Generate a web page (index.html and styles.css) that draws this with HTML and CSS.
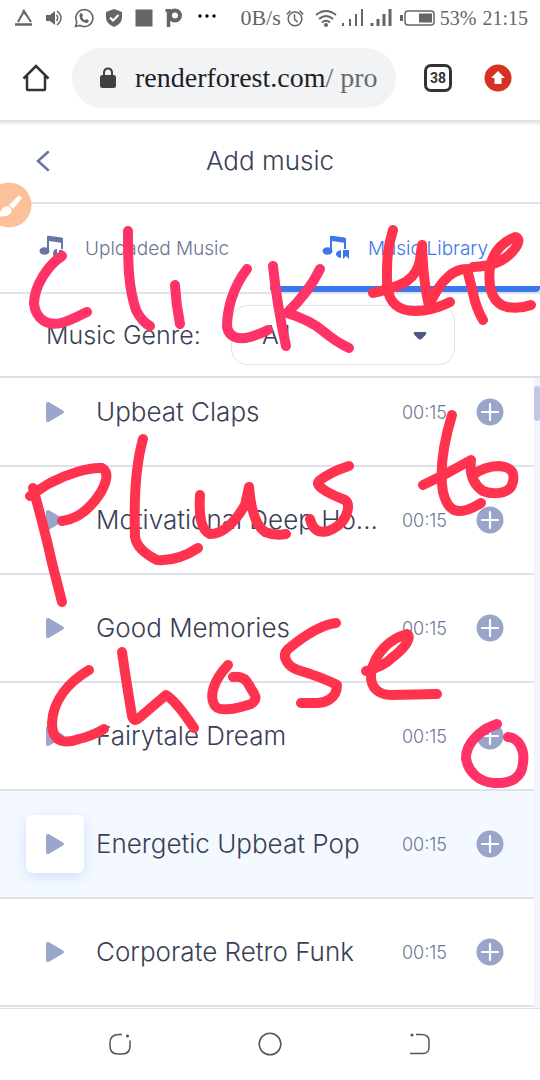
FILE: index.html
```html
<!DOCTYPE html>
<html lang="en">
<head>
<meta charset="utf-8">
<meta name="viewport" content="width=device-width, initial-scale=1">
<title>Add music</title>
<link rel="stylesheet" href="styles.css">
</head>
<body>
<svg class="defs" aria-hidden="true">
  <symbol id="play" viewBox="0 0 20 22"><path d="M1 3.2C1 1 2.800 .4 4.500 1.400L17.500 9.200C19.400 10.300 19.400 11.700 17.500 12.800L4.500 20.600C2.800 21.600 1 21 1 18.800Z" fill="#9aa5cc"/></symbol>
  <symbol id="plus" viewBox="0 0 28 28"><circle cx="14" cy="14" r="13.500" fill="#9aa5cc"/><path d="M14 6V22M6 14H22" stroke="#fff" stroke-width="2.200" stroke-linecap="round"/></symbol>
  <symbol id="note" viewBox="0 0 30 26"><ellipse cx="5.500" cy="16" rx="5" ry="3.800" fill="currentColor"/><path d="M9 16V2.500L23 4.500V14" fill="none" stroke="currentColor" stroke-width="2"/><path d="M8 1.500Q8 .5 9.500 .7L22.500 2.500Q24 2.800 24 4V8L10 6Z" fill="currentColor"/></symbol>
</svg>
<div class="screen">
  <div class="status">
    <div class="status-icons">
      <svg width="20" height="20" viewBox="0 0 20 20" fill="none" stroke="#656565" stroke-width="2"><path d="M4 14L10 3L17 14M9 2L12 7"/><path d="M1 16.500H18" stroke-width="2.500"/></svg>
      <svg width="20" height="20" viewBox="0 0 20 20" fill="#656565"><path d="M2 7H6L11 3V17L6 13H2Z"/><path d="M12.500 7Q15 10 12.500 13M13 3Q21 10 13 17" fill="none" stroke="#656565" stroke-width="1.500"/></svg>
      <svg width="20" height="20" viewBox="0 0 20 20"><path d="M1.500 18.500L2.800 14A8.500 8.500 0 1 1 6 17.400Z" fill="none" stroke="#656565" stroke-width="1.600"/><path d="M6.200 5.500Q7.500 4.500 8.300 6L9 8L8 9.200Q9.300 11.600 11.300 12.200L12.400 11L14.800 12.200Q14.800 15 12 15Q6 13.500 5.500 8Q5.500 6.500 6.200 5.500Z" fill="#656565"/></svg>
      <svg width="20" height="20" viewBox="0 0 20 20"><path d="M10 1L18 4V10Q17.500 16 10 19Q2.500 16 2 10V4Z" fill="#656565"/><path d="M6 9.500L9 12.500L14.500 7" fill="none" stroke="#fff" stroke-width="2"/></svg>
      <svg width="20" height="20" viewBox="0 0 20 20"><rect x="1.500" y="1.500" width="17" height="17" fill="#656565"/></svg>
      <svg width="20" height="20" viewBox="0 0 20 20"><path d="M4.500 19V3" stroke="#656565" stroke-width="3.500"/><circle cx="11" cy="7.500" r="5" fill="none" stroke="#656565" stroke-width="4"/><path d="M1.500 2.500H7" stroke="#656565" stroke-width="3"/></svg>
      <svg class="more" width="20" height="20" viewBox="0 0 20 20"><circle cx="2" cy="8" r="1.700"/><circle cx="9" cy="8" r="1.700"/><circle cx="16" cy="8" r="1.700"/></svg>
    </div>
    <div class="status-info">
      <span class="speed">0B/s</span>
      <svg width="20" height="20" viewBox="0 0 22 20" fill="none" stroke="#656565" stroke-width="1.600"><circle cx="11" cy="11" r="7.500"/><path d="M10.500 6V11.500L14 14.500M2 6L6 2M16 2L20 6"/></svg>
      <svg class="wifi" width="24" height="20" viewBox="0 0 24 20" fill="none" stroke="#656565" stroke-width="2"><path d="M2 7Q12-1 22 7M5 11Q12 5 19 11M8 14.500Q12 11 16 14.500"/><circle cx="12" cy="17" r="1" fill="#656565"/></svg>
      <svg width="50" height="20" viewBox="0 0 50 20" stroke="#656565"><g stroke-width="2"><path d="M1 18V15M8 18V11M14 18V6M20 18V1"/></g><g stroke-width="3"><path d="M30 18V15M36 18V11M42 18V6M48 18V1"/></g></svg>
      <svg class="battery" width="36" height="16" viewBox="0 0 36 16"><path d="M1.500 5V11" stroke="#656565" stroke-width="3"/><rect x="5" y="1" width="29" height="14" rx="3" fill="none" stroke="#656565" stroke-width="1.500"/><rect x="19" y="3.500" width="13" height="9" fill="#656565"/></svg>
      <span class="percent">53%</span>
      <time>21:15</time>
    </div>
  </div>

  <div class="browser">
    <button class="plain" aria-label="Home"><svg width="28" height="28" viewBox="0 0 28 28" fill="none" stroke="#333" stroke-width="2.500"><path d="M1.500 14.500L14 2L26.500 14.500M5 12V25Q5 26 6 26H22Q23 26 23 25V12"/></svg></button>
    <button class="address">
      <svg width="18" height="22" viewBox="0 0 18 22"><rect x="1" y="8" width="16" height="13" rx="2.500" fill="#404043"/><path d="M5 9V6Q5 1.500 9 1.500Q13 1.500 13 6V9" fill="none" stroke="#404043" stroke-width="2"/></svg>
      <span class="url">renderforest.com<span class="path">/ pro</span></span>
    </button>
    <button class="count" aria-label="Open tabs">38</button>
    <button class="plain" aria-label="Update"><svg width="28" height="28" viewBox="0 0 28 28"><circle cx="14" cy="14" r="13.500" fill="#d93025"/><path d="M14 7L21 14H17.500V20H10.500V14H7Z" fill="#fff"/></svg></button>
  </div>

  <header class="header">
    <button class="plain back" aria-label="Back"><svg width="14" height="22" viewBox="0 0 14 22" fill="none" stroke="#6875a3" stroke-width="2.500" stroke-linecap="round"><path d="M12 2L2 11L12 20"/></svg></button>
    <h1>Add music</h1>
  </header>

  <nav class="tabs">
    <a class="tab" href="#uploaded"><svg width="30" height="26"><use href="#note"/><path d="M14 19Q14 14 18 14V22Q14 22 14 19ZM20 15H24V22H20Z" fill="currentColor"/></svg><span>Uploaded Music</span></a>
    <a class="tab active" href="#library"><svg width="30" height="26"><use href="#note"/><path d="M19 15V23Q14 22 14 19Q14 16 19 15ZM21 15H27V24L24 21L21 24Z" fill="currentColor"/></svg><span>Music Library</span></a>
  </nav>

  <div class="filter">
    <label for="genre">Music Genre:</label>
    <div class="select">
      <select id="genre"><option>All</option></select>
      <svg class="caret" width="14" height="8" viewBox="0 0 14 8"><path d="M1 0H13Q14 2 12 3.500L8.500 7Q7 8 5.500 7L2 3.500Q0 2 1 0Z" fill="#4f5a80"/></svg>
    </div>
  </div>

  <main class="library">
    <ul class="tracks">
      <li><button class="play" aria-label="Play"><svg width="20" height="22"><use href="#play"/></svg></button><span class="title">Upbeat Claps</span><time>00:15</time><button class="plain" aria-label="Add"><svg width="28" height="28"><use href="#plus"/></svg></button></li>
      <li><button class="play" aria-label="Play"><svg width="20" height="22"><use href="#play"/></svg></button><span class="title">Motivational Deep Ho...</span><time>00:15</time><button class="plain" aria-label="Add"><svg width="28" height="28"><use href="#plus"/></svg></button></li>
      <li><button class="play" aria-label="Play"><svg width="20" height="22"><use href="#play"/></svg></button><span class="title">Good Memories</span><time>00:15</time><button class="plain" aria-label="Add"><svg width="28" height="28"><use href="#plus"/></svg></button></li>
      <li><button class="play" aria-label="Play"><svg width="20" height="22"><use href="#play"/></svg></button><span class="title">Fairytale Dream</span><time>00:15</time><button class="plain" aria-label="Add"><svg width="28" height="28"><use href="#plus"/></svg></button></li>
      <li class="current"><button class="play" aria-label="Play"><svg width="20" height="22"><use href="#play"/></svg></button><span class="title">Energetic Upbeat Pop</span><time>00:15</time><button class="plain" aria-label="Add"><svg width="28" height="28"><use href="#plus"/></svg></button></li>
      <li><button class="play" aria-label="Play"><svg width="20" height="22"><use href="#play"/></svg></button><span class="title">Corporate Retro Funk</span><time>00:15</time><button class="plain" aria-label="Add"><svg width="28" height="28"><use href="#plus"/></svg></button></li>
    </ul>
    <div class="track-bar"><div class="thumb"></div></div>
  </main>

  <footer class="system">
    <button class="plain" aria-label="Recent apps"><svg width="24" height="24" viewBox="0 0 24 24" fill="none" stroke="#555" stroke-width="1.500"><path d="M14 2.500H11Q2 2.500 2 11V14Q2 22 10 22H14Q22 22 22 14V8.500"/><circle cx="19.500" cy="4" r=".8" fill="#555"/></svg></button>
    <button class="plain" aria-label="Home screen"><svg width="24" height="24" viewBox="0 0 24 24" fill="none" stroke="#555" stroke-width="1.500"><circle cx="12" cy="12" r="10.800"/></svg></button>
    <button class="plain" aria-label="Go back"><svg width="24" height="24" viewBox="0 0 24 24" fill="none" stroke="#555" stroke-width="1.500"><path d="M8 2.500H13Q21 2.500 21 9V15Q21 21.500 15 21.500H2"/><circle cx="4" cy="3" r=".8" fill="#555"/></svg></button>
  </footer>

  <button class="brush" aria-label="Draw"><svg width="46" height="46" viewBox="0 0 46 46"><circle cx="23" cy="23" r="22.500" fill="#fcc198"/><path d="M23 23L33 13L36 16L27 27ZM13 34Q15 25 21 24Q27 26 25 31Q20 36 13 34Z" fill="#fff"/></svg></button>

  <svg class="ink" viewBox="0 0 540 1080" fill="none" stroke-width="10" stroke-linecap="round" stroke-linejoin="round" aria-hidden="true">
    <g stroke="#ff3367">
      <path d="M62 256C48 265 34 286 34 304C36 320 48 326 61 323C70 321 78 316 87 312"/>
      <path d="M128 231C128 261 128 287 136 310C140 318 144 323 150 326"/>
      <path d="M175 285Q176 304 180 324"/>
      <path d="M247 269C233 287 227 309 227 327C229 338 240 340 250 337Q258 335 268 330"/>
      <path d="M273 266Q277 305 286 346M320 269Q309 292 287 313Q310 320 323 331T349 348"/>
      <path d="M497 724C480 730 466 743 466 758C468 772 479 782 494 783C511 784 522 778 523 763C525 750 519 738 508 737"/>
    </g>
    <g stroke="#ff334e">
      <path d="M393 230C386 252 387 267 387 287C390 305 400 311 415 311Q432 311 450 302"/>
      <path d="M373 293Q398 287 407 281Q418 273 420 260L422 245Q423 280 429 306Q438 285 449 276Q457 269 467 269L473 293Q476 308 483 320"/>
      <path d="M473 267C492 266 501 262 509 255C522 243 519 237 515 237C503 242 493 252 490 267C488 283 490 303 507 307Q520 309 531 305"/>
      <path d="M33 488Q46 535 52 563L62 602M30 496Q43 487 50 483C67 474 89 467 102 468C109 472 107 481 101 492C91 508 79 519 62 521"/>
      <path d="M143 439C134 471 134 507 135 537C137 550 151 557 157 560C171 561 183 558 198 548"/>
      <path d="M200 495C199 513 200 530 210 534C226 534 238 517 245 505L249 487Q252 523 265 532Q275 536 286 534"/>
      <path d="M349 466Q330 472 319 481C313 487 335 496 345 500C351 504 347 516 342 522C333 531 315 540 310 519"/>
      <path d="M452 415C442 448 440 475 443 492C449 518 465 513 481 503M423 485Q447 474 471 460C469 476 474 485 483 491C493 495 508 494 512 485C516 473 512 467 499 466Q485 466 473 475"/>
      <path d="M89 670C69 682 53 700 52 723C52 745 68 743 79 739Q92 736 104 729"/>
      <path d="M122 652Q126 680 132 716Q134 723 139 718L166 695Q176 701 194 728"/>
      <path d="M228 665C212 682 210 697 214 704C217 713 236 709 251 704C259 698 255 696 249 685Q244 675 233 677"/>
      <path d="M336 623C318 625 299 640 288 649C280 657 289 667 298 670Q324 678 337 685C337 700 323 703 317 703H301"/>
      <path d="M366 671Q383 667 393 657C406 647 412 637 407 634C392 638 374 652 371 674C370 689 380 695 391 695L437 694"/>
    </g>
  </svg>
</div>
</body>
</html>
```
FILE: styles.css
```css
* { box-sizing: border-box; }
body { margin: 0; background: #fff; color: #3a4056; font-family: Inter, "Open Sans", sans-serif; font-weight: 300; }
button { font: inherit; color: inherit; cursor: pointer; }
svg { display: block; flex-shrink: 0; }
a { text-decoration: none; }
.defs { position: absolute; width: 0; height: 0; }
.screen { position: relative; display: flex; flex-direction: column; min-height: 100vh; overflow: hidden; }
.plain { display: flex; padding: 0; border: 0; background: none; }

.status { display: flex; justify-content: space-between; align-items: center; height: 36px; padding: 0 12px 0 14px; font-family: "Liberation Serif", serif; font-size: 20px; font-weight: 400; color: #656565; }
.status-icons { display: flex; gap: 10px; }
.more { margin-left: 4px; }
.status-info { display: flex; align-items: center; gap: 4px; }
.speed { font-size: 22px; }
.wifi { margin-left: 5px; }
.battery { margin-left: 4px; }
.percent { margin-right: 2px; }

.browser { display: flex; align-items: center; height: 84px; padding: 0 28px 0 22px; }
.address { display: flex; flex: 1; align-items: center; gap: 18px; height: 60px; margin: 0 28px 0 22px; padding: 0 14px 0 27px; border: 0; border-radius: 30px; background: #f1f3f5; overflow: hidden; }
.url { font-family: "Liberation Serif", serif; font-size: 28px; font-weight: 400; color: #202124; white-space: nowrap; }
.path { color: #65686c; }
.count { width: 28px; height: 28px; margin-right: 32px; padding: 0; border: 3px solid #333; border-radius: 7px; background: none; font: 700 14px Roboto, sans-serif; color: #333; }

.header { display: flex; align-items: center; justify-content: center; position: relative; height: 84px; border-bottom: 2px solid #dfe3ec; background: linear-gradient(#dcdcdc, #fff 6px); }
.header h1 { margin: 0; font-size: 26px; font-weight: 300; line-height: 32px; }
.back { position: absolute; left: 36px; }

.tabs { display: grid; grid-template-columns: 1fr 1fr; height: 90px; border-bottom: 2px solid #dfe3ec; }
.tab { display: flex; align-items: center; gap: 16px; padding-left: 39px; color: #6a7494; font-size: 19px; }
.tab svg { color: #6875a3; }
.tab.active, .tab.active svg { color: #3b78ee; }
.tab.active { padding-left: 52px; padding-top: 6px; border-bottom: 6px solid #3b78ee; border-radius: 4px; }

.filter { display: flex; align-items: center; gap: 30px; height: 84px; padding-left: 46px; border-bottom: 2px solid #dcdfe8; font-size: 25px; }
.select { position: relative; width: 224px; }
.select select { display: block; width: 100%; height: 60px; padding: 0 30px; border: 1px solid #dfe3ea; border-radius: 16px; background: #fff; color: #3a4056; font: inherit; appearance: none; }
.caret { position: absolute; right: 28px; top: 27px; pointer-events: none; }

.library { display: flex; flex: 1; overflow: hidden; }
.tracks { flex: 1; min-width: 0; margin: -19px 0 0; padding: 0; list-style: none; }
.tracks li { display: flex; align-items: center; height: 108px; padding: 0 30px 0 26px; border-bottom: 2px solid #dde1ea; }
.tracks .current { background: #f4f9ff; }
.play { display: flex; align-items: center; justify-content: center; width: 58px; height: 58px; margin-right: 12px; padding: 0; border: 0; border-radius: 6px; background: none; }
.current .play { background: #fff; box-shadow: 0 4px 14px #cfe0f8; }
.title { flex: 1; font-size: 26px; line-height: 32px; white-space: nowrap; }
.tracks time { margin-right: 29px; color: #6d7798; font-size: 18px; }
.track-bar { width: 6px; padding-top: 8px; background: #f0f4fd; }
.thumb { height: 35px; border-radius: 3px; background: #c3c7e3; }

.system { display: flex; justify-content: center; gap: 126px; height: 72px; padding-top: 23px; border-top: 1px solid #dfdfe4; background: #fff; }

.brush { position: absolute; left: -14px; top: 182px; padding: 0; border: 0; background: none; }
.ink { position: absolute; top: 0; left: 0; width: 100%; pointer-events: none; }
```
